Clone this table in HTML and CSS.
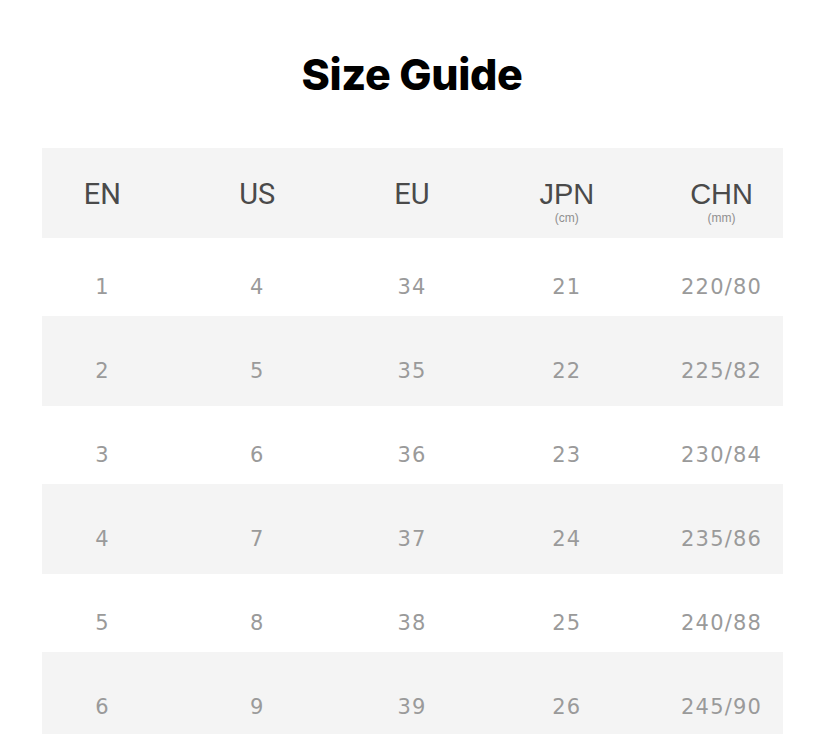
FILE: index.html
```html
<!DOCTYPE html>
<html>
<head>
<meta charset="utf-8">
<link rel="stylesheet" href="styles.css">
</head>
<body>
<main class="page">
  <h1 class="title">Size Guide</h1>
  <section class="table">
    <div class="row head">
      <div class="cells">
        <div class="cell"><span class="label">EN</span></div>
        <div class="cell"><span class="label">US</span></div>
        <div class="cell"><span class="label">EU</span></div>
        <div class="cell"><span class="label alt">JPN</span><span class="unit">(cm)</span></div>
        <div class="cell"><span class="label alt">CHN</span><span class="unit">(mm)</span></div>
      </div>
    </div>
    <div class="row">
      <div class="cells"><div class="cell num">1</div><div class="cell num">4</div><div class="cell num">34</div><div class="cell num">21</div><div class="cell num">220/80</div></div>
    </div>
    <div class="row shade">
      <div class="cells"><div class="cell num">2</div><div class="cell num">5</div><div class="cell num">35</div><div class="cell num">22</div><div class="cell num">225/82</div></div>
    </div>
    <div class="row">
      <div class="cells"><div class="cell num">3</div><div class="cell num">6</div><div class="cell num">36</div><div class="cell num">23</div><div class="cell num">230/84</div></div>
    </div>
    <div class="row shade">
      <div class="cells"><div class="cell num">4</div><div class="cell num">7</div><div class="cell num">37</div><div class="cell num">24</div><div class="cell num">235/86</div></div>
    </div>
    <div class="row">
      <div class="cells"><div class="cell num">5</div><div class="cell num">8</div><div class="cell num">38</div><div class="cell num">25</div><div class="cell num">240/88</div></div>
    </div>
    <div class="row shade">
      <div class="cells"><div class="cell num">6</div><div class="cell num">9</div><div class="cell num">39</div><div class="cell num">26</div><div class="cell num">245/90</div></div>
    </div>
  </section>
</main>
</body>
</html>
```
FILE: styles.css
```css
html, body {
  margin: 0;
  padding: 0;
  background: #ffffff;
}
.page {
  width: 824px;
  height: 734px;
  overflow: hidden;
  display: flex;
  flex-direction: column;
  align-items: center;
}
.title {
  margin: 0;
  padding-top: 48px;
  height: 100px;
  flex-shrink: 0;
  box-sizing: content-box;
  font-family: Inter, "Liberation Sans", sans-serif;
  font-weight: 800;
  font-size: 43px;
  line-height: 52px;
  letter-spacing: -0.4px;
  color: #000;
}
.table {
  width: 741px;
  display: flex;
  flex-direction: column;
  flex-shrink: 0;
}
.row {
  height: 78px;
  box-sizing: border-box;
  padding-top: 19px;
  display: flex;
  align-items: center;
  flex-shrink: 0;
}
.row.head {
  height: 90px;
  padding-top: 0;
  background: #f4f4f4;
}
.row.shade {
  height: 90px;
  background: #f4f4f4;
}
.cells {
  width: 100%;
  display: grid;
  grid-template-columns: repeat(5, 154.8px);
  justify-content: center;
}
.cell {
  display: flex;
  flex-direction: column;
  align-items: center;
  text-align: center;
}
.head .cell {
  height: 52px;
  padding-top: 12px;
  box-sizing: border-box;
}
.label {
  font-family: Roboto, "Liberation Sans", sans-serif;
  font-size: 29px;
  line-height: 30px;
  color: #4a4a4a;
}
.label.alt {
  font-family: "Liberation Sans", Arial, sans-serif;
}
.unit {
  font-family: "Liberation Sans", Arial, sans-serif;
  font-size: 12px;
  line-height: 13px;
  color: #8f8f8f;
  margin-top: 3px;
}
.num {
  font-family: "DejaVu Sans", sans-serif;
  font-size: 21px;
  letter-spacing: 1.2px;
  color: #9a9a9a;
  line-height: 24px;
}
```
